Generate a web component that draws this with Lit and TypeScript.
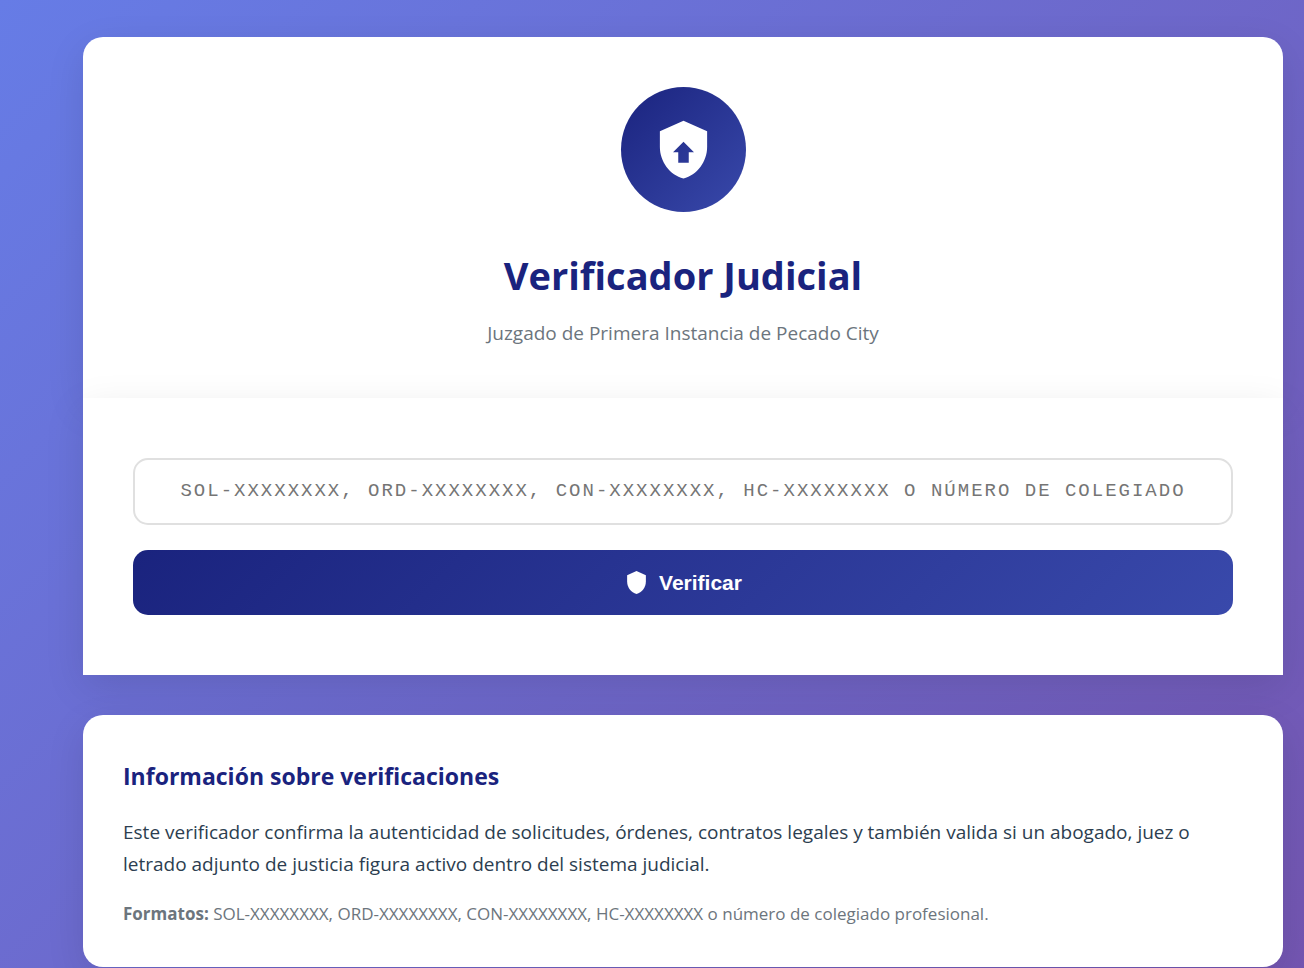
import { LitElement, html, css } from "lit";
import { customElement, state } from "lit/decorators.js";

@customElement("app-root")
export class AppRoot extends LitElement {
  static styles = css`
    :host {
      display: block;
      box-sizing: border-box;
      min-height: 100vh;
      padding: 37px 21px 1px 83px;
      background: linear-gradient(135deg, #667ce6 0%, #764fa8 118%);
      font-family: "Segoe UI", "Open Sans", "Noto Sans", sans-serif;
      color: #2c3e50;
    }
    *,
    *::before,
    *::after {
      box-sizing: border-box;
    }
    .container {
      max-width: 1200px;
      margin: 0 auto;
    }
    .header,
    .form,
    .info {
      background: #fff;
      box-shadow: 0 12px 38px rgba(0, 0, 0, 0.1);
    }
    .header {
      padding: 50px;
      border-radius: 20px 20px 0 0;
      text-align: center;
    }
    .logo {
      display: flex;
      align-items: center;
      justify-content: center;
      width: 125px;
      height: 125px;
      margin: 0 auto 35px;
      border-radius: 50%;
      background: linear-gradient(135deg, #1a237e, #3949ab);
    }
    .logo-icon {
      width: 63px;
      height: 63px;
      fill: #fff;
    }
    .title {
      margin: 0 0 16px;
      font-size: 38px;
      line-height: 56px;
      font-weight: 700;
      color: #1a237e;
    }
    .subtitle {
      margin: 0;
      font-size: 19px;
      line-height: 29px;
      color: #6c757d;
    }
    .form {
      display: flex;
      flex-direction: column;
      gap: 25px;
      padding: 60px 50px;
    }
    .code {
      width: 100%;
      padding: 16px 24px;
      border: 2px solid #e0e0e0;
      border-radius: 15px;
      background: #fff;
      color: #2c3e50;
      font-family: "Courier New", "Liberation Mono", monospace;
      font-size: 19px;
      line-height: 31px;
      letter-spacing: 2px;
      text-align: center;
      text-transform: uppercase;
      outline: none;
    }
    .code::placeholder {
      color: #757575;
    }
    .code:focus-visible {
      border-color: #3949ab;
    }
    .submit {
      display: flex;
      align-items: center;
      justify-content: center;
      gap: 10px;
      width: 100%;
      padding: 20px;
      border: 0;
      border-radius: 15px;
      background: linear-gradient(135deg, #1a237e, #3949ab);
      color: #fff;
      font-family: Arial, "Liberation Sans", sans-serif;
      font-size: 21px;
      line-height: 25px;
      font-weight: 700;
      cursor: pointer;
    }
    .submit-icon {
      width: 25px;
      height: 25px;
      fill: currentColor;
    }
    .info {
      margin-top: 40px;
      padding: 40px;
      border-radius: 20px;
    }
    .info-title {
      margin: 0 0 19px;
      font-size: 23px;
      line-height: 42px;
      font-weight: 700;
      color: #1a237e;
    }
    .info-text {
      margin: 0 0 21px;
      font-size: 19px;
      line-height: 32px;
    }
    .info-formats {
      margin: 0;
      font-size: 17px;
      line-height: 26px;
      color: #6c757d;
    }
  `;

  @state() private code = "";

  private onInput(e: Event) {
    this.code = (e.target as HTMLInputElement).value;
  }

  private onSubmit(e: Event) {
    e.preventDefault();
  }

  render() {
    return html`
      <main class="container">
        <header class="header">
          <div class="logo">
            <svg class="logo-icon" viewBox="0 0 24 24" aria-hidden="true">
              <path
                fill-rule="evenodd"
                d="M12 1 3 5v6c0 5.550 3.840 10.740 9 12 5.160-1.260 9-6.450 9-12V5zM12 9l4 4h-2v4h-4v-4H8z"
              />
            </svg>
          </div>
          <h1 class="title" id="title">Verificador Judicial</h1>
          <p class="subtitle">Juzgado de Primera Instancia de Pecado City</p>
        </header>

        <form class="form" @submit=${this.onSubmit}>
          <input
            class="code"
            type="text"
            autocomplete="off"
            aria-labelledby="title"
            placeholder="SOL-XXXXXXXX, ORD-XXXXXXXX, CON-XXXXXXXX, HC-XXXXXXXX o número de colegiado"
            .value=${this.code}
            @input=${this.onInput}
          />
          <button class="submit" type="submit">
            <svg class="submit-icon" viewBox="0 0 24 24" aria-hidden="true">
              <path d="M12 1 3 5v6c0 5.550 3.840 10.740 9 12 5.160-1.260 9-6.450 9-12V5z" />
            </svg>
            Verificar
          </button>
        </form>

        <section class="info">
          <h2 class="info-title">Información sobre verificaciones</h2>
          <p class="info-text">
            Este verificador confirma la autenticidad de solicitudes, órdenes, contratos legales y también valida si un
            abogado, juez o letrado adjunto de justicia figura activo dentro del sistema judicial.
          </p>
          <p class="info-formats">
            <strong>Formatos:</strong> SOL-XXXXXXXX, ORD-XXXXXXXX, CON-XXXXXXXX, HC-XXXXXXXX o número de colegiado
            profesional.
          </p>
        </section>
      </main>
    `;
  }
}
